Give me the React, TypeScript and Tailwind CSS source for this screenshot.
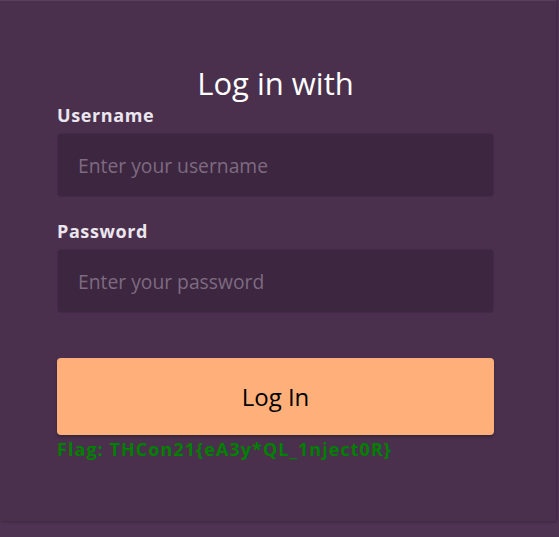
import React from 'react';

export default function App() {
    const [username, setUsername] = React.useState('');
    const [password, setPassword] = React.useState('');

    return (
        <div className="min-h-[537px] w-[559px] bg-[#4f3353] font-['Open_Sans',sans-serif]">
            <div className="w-[556px] h-[521px] bg-[#4a304d] border-t border-[#5a3f5d] shadow-[1px_1px_3px_rgba(0,0,0,0.25)] pt-[62px]">
                <div className="ml-[57px] w-[437px] flex flex-col">
                    <h1 className="text-center text-[31px] leading-[40px] text-white font-normal">Log in with</h1>

                    <label className="text-[18px] leading-[24px] font-bold tracking-[0.6px] text-[#ebe6ee]">Username</label>
                    <input
                        type="text"
                        value={username}
                        onChange={(e) => setUsername(e.target.value)}
                        placeholder="Enter your username"
                        className="mt-[6px] h-[64px] w-full rounded-[4px] border border-[#44294a] bg-[#3d2640] px-[20px] text-[19.3px] text-white placeholder:text-[#7e6b81] outline-none"
                    />

                    <label className="mt-[22px] text-[18px] leading-[24px] font-bold tracking-[0.6px] text-[#ebe6ee]">Password</label>
                    <input
                        type="password"
                        value={password}
                        onChange={(e) => setPassword(e.target.value)}
                        placeholder="Enter your password"
                        className="mt-[6px] h-[64px] w-full rounded-[4px] border border-[#44294a] bg-[#3d2640] px-[20px] text-[19.3px] text-white placeholder:text-[#7e6b81] outline-none"
                    />

                    <button className="mt-[45px] h-[77px] w-full rounded-[4px] bg-[#ffb07a] text-[24px] text-black shadow-[0_2px_3px_rgba(0,0,0,0.25)]">
                        Log In
                    </button>

                    <p className="mt-[2px] text-[18px] leading-[24px] font-bold tracking-[1.05px] text-[#008000]">Flag: THCon21{'{'}eA3y*QL_1nject0R{'}'}</p>
                </div>
            </div>
        </div>
    );
}
